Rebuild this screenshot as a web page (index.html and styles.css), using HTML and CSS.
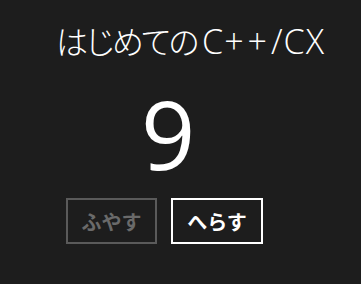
FILE: index.html
```html
<!DOCTYPE html>
<html lang="ja">
<head>
    <meta charset="UTF-8">
    <title>はじめてのC++/CX</title>
    <link rel="stylesheet" href="styles.css">
</head>
<body>
    <div class="app">
        <h1 class="title"><span class="jp">はじめての</span><span class="en">C<span class="plus">++</span>/CX</span></h1>
        <div class="count">9</div>
        <div class="buttons">
            <button class="btn disabled">ふやす</button>
            <button class="btn">へらす</button>
        </div>
    </div>
</body>
</html>
```

FILE: styles.css
```css
body {
    margin: 0;
    background-color: #1d1d1d;
    color: #ffffff;
    font-family: "Open Sans", "Noto Sans CJK JP", sans-serif;
}
.app {
    width: 361px;
    height: 284px;
    padding: 18px 0 0 0;
    box-sizing: border-box;
}
.title {
    margin: 0 0 0 56px;
    font-weight: 300;
    line-height: 44px;
    white-space: nowrap;
}
.title .jp {
    font-family: "Noto Sans CJK JP", sans-serif;
    font-size: 32px;
    font-weight: 300;
    letter-spacing: -4px;
}
.title .en {
    font-family: "Open Sans", sans-serif;
    font-size: 34px;
    font-weight: 300;
    letter-spacing: 1px;
    margin-left: 6px;
}
.title .plus {
    letter-spacing: 4px;
}
.count {
    margin: 19px 0 0 141px;
    font-size: 95px;
    font-weight: 400;
    line-height: 100px;
}
.buttons {
    display: flex;
    gap: 14px;
    margin: 15px 0 0 66px;
}
.btn {
    width: 92px;
    height: 46px;
    background: transparent;
    border: 2px solid #ffffff;
    color: #ffffff;
    font-family: "Noto Sans CJK JP", sans-serif;
    font-size: 20px;
    font-weight: bold;
    padding: 0;
}
.btn.disabled {
    width: 91px;
    border-color: #5a5a5a;
    color: #6a6a6a;
}
```
